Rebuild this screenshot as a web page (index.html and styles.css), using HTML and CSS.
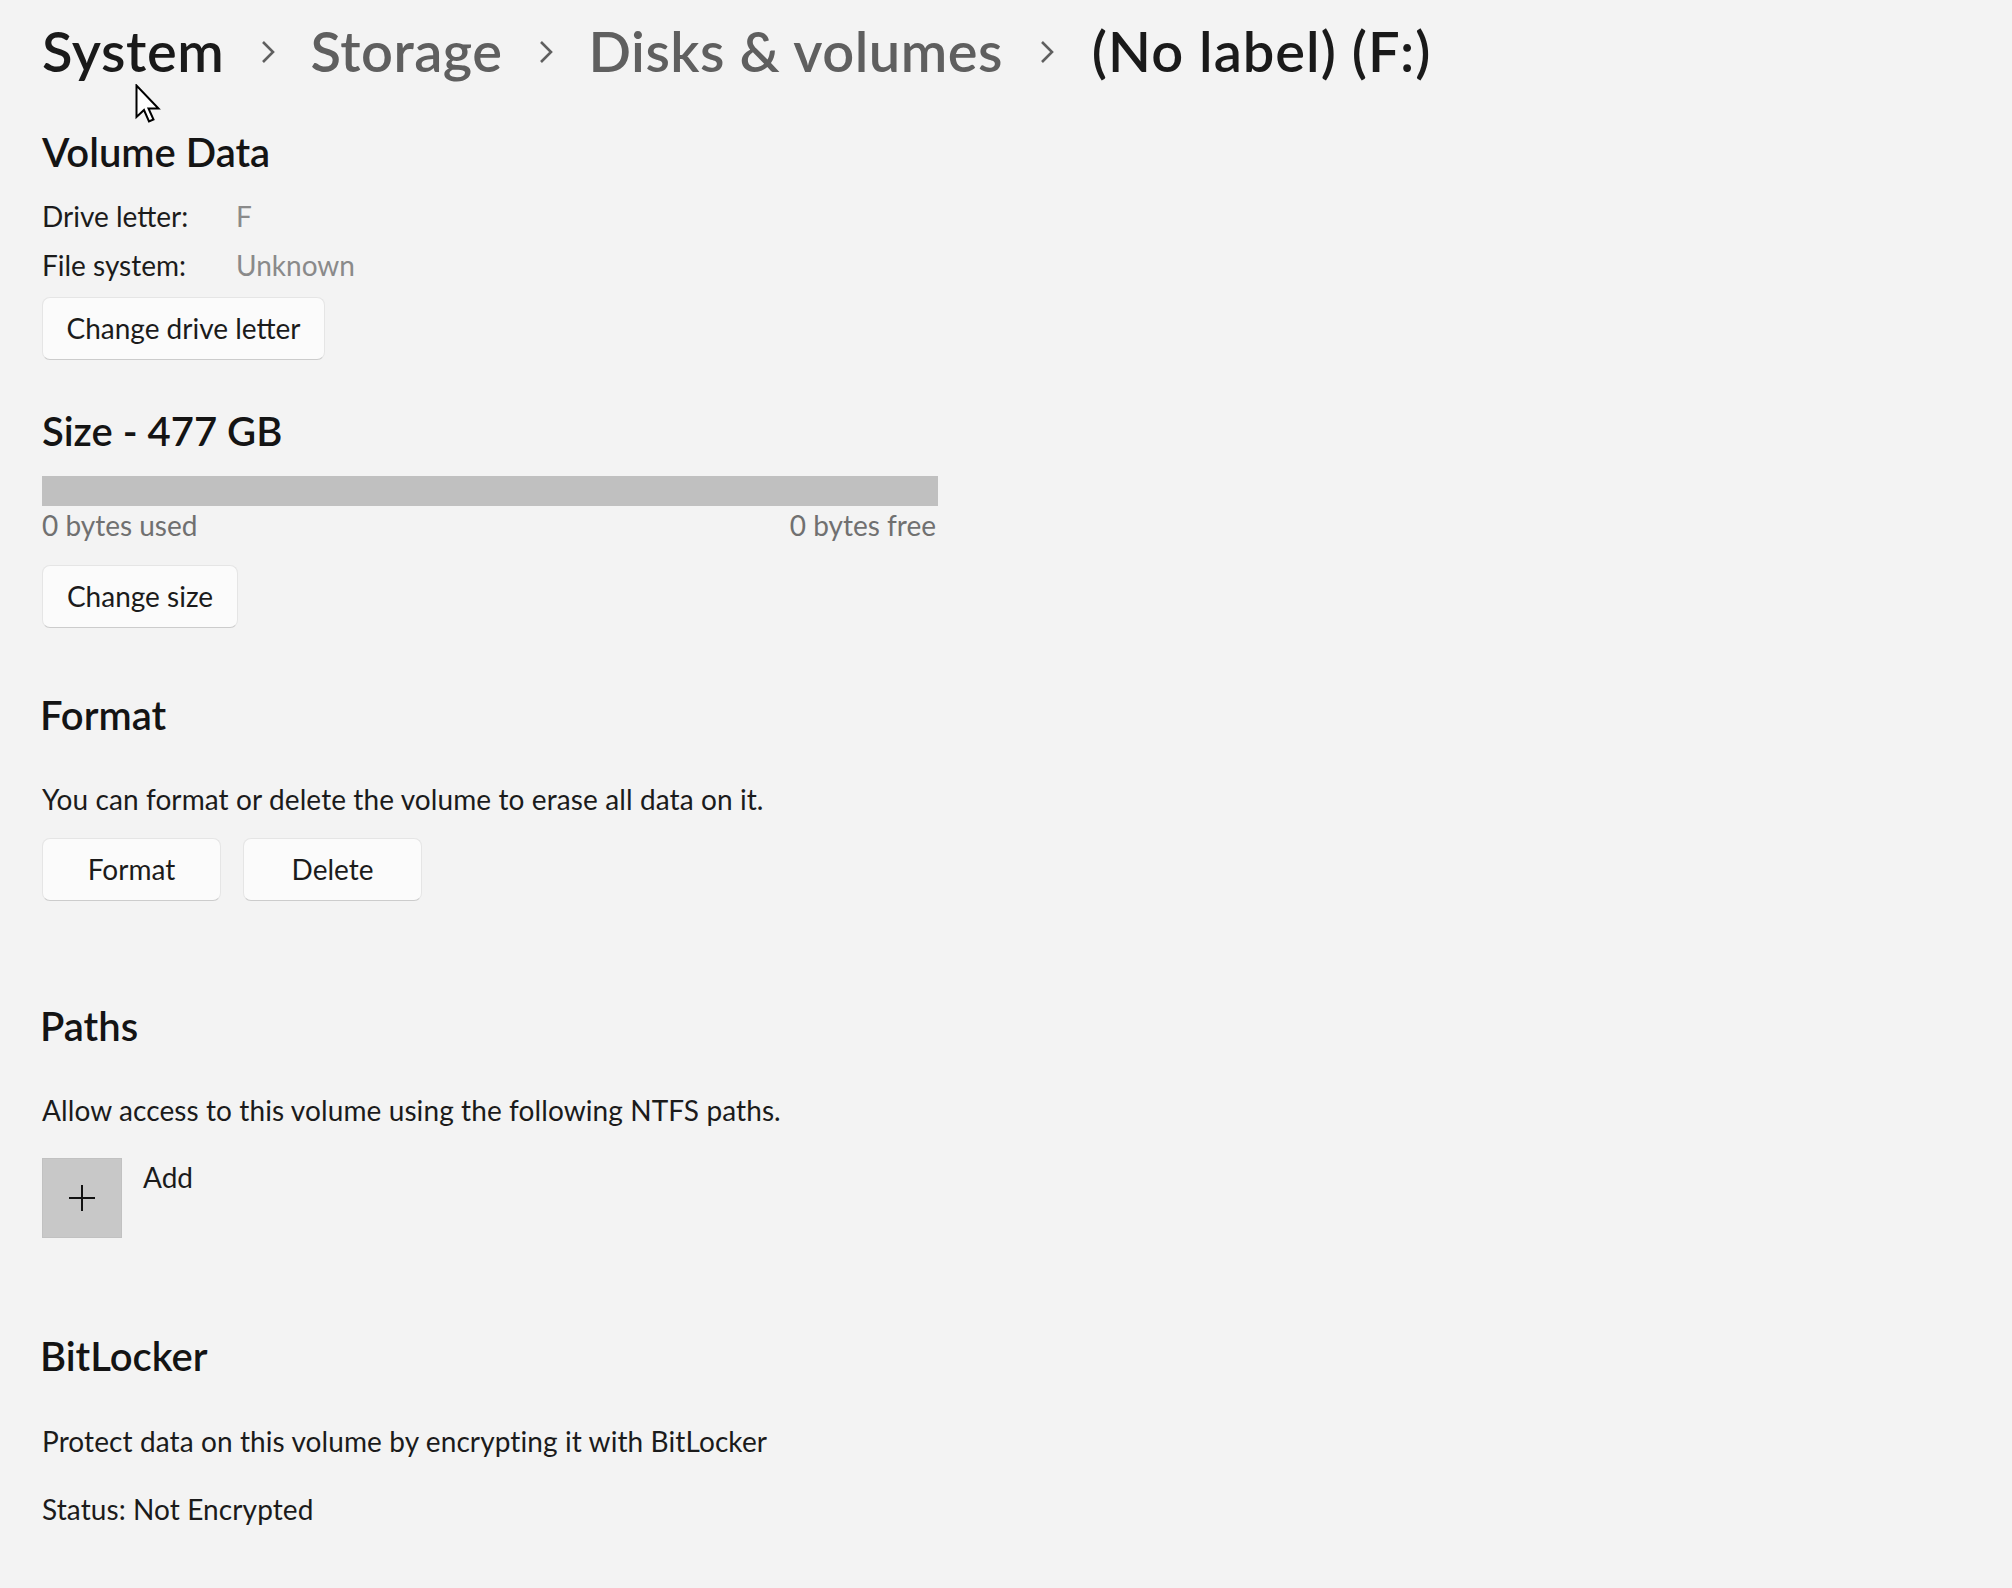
FILE: index.html
```html
<!DOCTYPE html>
<html lang="en">
<head>
<meta charset="utf-8">
<title>(No label) (F:)</title>
<link rel="stylesheet" href="styles.css">
</head>
<body>
<main class="page">
  <nav class="crumbs">
    <span class="crumb crumb-dark">System</span>
    <svg class="chev" viewBox="0 0 16 24" width="16" height="24"><path d="M3 2 L13 12 L3 22" fill="none" stroke="#5f5f5f" stroke-width="2.6"/></svg>
    <span class="crumb crumb-gray">Storage</span>
    <svg class="chev" viewBox="0 0 16 24" width="16" height="24"><path d="M3 2 L13 12 L3 22" fill="none" stroke="#5f5f5f" stroke-width="2.6"/></svg>
    <span class="crumb crumb-gray">Disks &amp; volumes</span>
    <svg class="chev chev-last" viewBox="0 0 16 24" width="16" height="24"><path d="M3 2 L13 12 L3 22" fill="none" stroke="#5f5f5f" stroke-width="2.6"/></svg>
    <span class="crumb crumb-dark crumb-current">(No label) (F:)</span>
  </nav>

  <section class="sec sec-volume">
    <h2 class="heading">Volume Data</h2>
    <div class="info">
      <div class="info-row"><span class="info-key">Drive letter:</span><span class="info-val">F</span></div>
      <div class="info-row"><span class="info-key">File system:</span><span class="info-val">Unknown</span></div>
    </div>
    <button class="btn btn-first">Change drive letter</button>
  </section>

  <section class="sec sec-size">
    <h2 class="heading">Size - 477 GB</h2>
    <div class="bar"></div>
    <div class="bar-labels"><span>0 bytes used</span><span>0 bytes free</span></div>
    <button class="btn btn-size">Change size</button>
  </section>

  <section class="sec sec-format">
    <h2 class="heading heading-shift">Format</h2>
    <p class="desc">You can format or delete the volume to erase all data on it.</p>
    <div class="btn-row">
      <button class="btn btn-wide">Format</button>
      <button class="btn btn-wide">Delete</button>
    </div>
  </section>

  <section class="sec sec-paths">
    <h2 class="heading heading-shift">Paths</h2>
    <p class="desc">Allow access to this volume using the following NTFS paths.</p>
    <div class="add-row">
      <div class="add-box"><svg viewBox="0 0 26 26" width="26" height="26"><path d="M13 0 V26 M0 13 H26" stroke="#111" stroke-width="2" fill="none"/></svg></div>
      <span class="add-label">Add</span>
    </div>
  </section>

  <section class="sec sec-bitlocker">
    <h2 class="heading heading-shift">BitLocker</h2>
    <p class="desc desc-bl">Protect data on this volume by encrypting it with BitLocker</p>
    <p class="desc desc-status">Status: Not Encrypted</p>
  </section>
</main>
<svg class="cursor" viewBox="0 0 26 40" width="26" height="40"><path d="M1.5 1.5 L1.5 33 L9 26 L14 37.5 L18.5 35.5 L13.5 24.5 L23.5 24.5 Z" fill="#fff" stroke="#000" stroke-width="2" stroke-linejoin="miter"/></svg>
</body>
</html>
```

FILE: styles.css
```css
html, body {
  margin: 0;
  padding: 0;
  background: #f3f3f3;
}
body {
  font-family: "Lato", "Noto Sans", sans-serif;
  color: #1b1b1b;
  width: 2012px;
  height: 1588px;
  overflow: hidden;
  position: relative;
}
.page {
  padding: 13px 0 0 42px;
  display: flex;
  flex-direction: column;
}
.crumbs {
  display: flex;
  align-items: center;
  height: 76px;
  font-size: 56px;
  line-height: 76px;
  font-weight: 600;
}
.crumb { white-space: nowrap; }
.crumb-dark { color: #1a1a1a; letter-spacing: 0.6px; }
.crumb-current { letter-spacing: 1px; }
.crumb-gray { color: #5f5f5f; letter-spacing: 0.5px; }
.chev {
  width: 16px;
  height: 24px;
  margin: 0 34px 0 36px;
  position: relative;
  top: 1px;
}
.chev-last { margin-right: 37px; }
.sec {
  display: flex;
  flex-direction: column;
  align-items: flex-start;
}
.heading {
  margin: 0;
  padding-top: 3px;
  font-size: 40px;
  line-height: 52px;
  font-weight: 600;
  color: #141414;
}
.heading-shift { margin-left: -2px; }
.sec-volume { margin-top: 34px; }
.sec-size { margin-top: 42px; }
.sec-format { margin-top: 58px; }
.sec-paths { margin-top: 96px; }
.sec-bitlocker { margin-top: 89px; }

.info {
  margin-top: 19px;
  display: flex;
  flex-direction: column;
  gap: 11px;
  font-size: 28px;
  line-height: 38px;
}
.info-row { display: flex; }
.info-key { width: 194px; color: #1b1b1b; }
.info-val { color: #8a8a8a; }

.btn {
  font-family: inherit;
  font-size: 28px;
  line-height: 38px;
  color: #1b1b1b;
  background: #fbfbfb;
  border: 1px solid #e5e5e5;
  border-bottom-color: #cccccc;
  border-radius: 8px;
  padding: 11px 22px 12px;
  margin: 0;
  cursor: default;
}
.btn-first { margin-top: 13px; width: 283px; }
.btn-size { margin-top: 21px; width: 196px; }
.btn-wide { width: 179px; }

.bar {
  margin-top: 19px;
  width: 896px;
  height: 30px;
  background: #c0c0c0;
}
.bar-labels {
  width: 894px;
  display: flex;
  justify-content: space-between;
  font-size: 28px;
  line-height: 38px;
  color: #707070;
}

.desc {
  margin: 39px 0 0;
  font-size: 28px;
  line-height: 38px;
  color: #1b1b1b;
  letter-spacing: 0.1px;
}
.desc-bl { margin-top: 40px; }
.desc-status { margin-top: 30px; }

.btn-row {
  margin-top: 20px;
  display: flex;
  gap: 22px;
}

.add-row {
  margin-top: 29px;
  display: flex;
  align-items: flex-start;
  gap: 21px;
}
.add-box {
  width: 78px;
  height: 78px;
  background: #c8c8c8;
  border: 1px solid #c1c1c1;
  display: flex;
  align-items: center;
  justify-content: center;
}
.add-label {
  font-size: 28px;
  line-height: 38px;
  color: #1b1b1b;
}

.cursor {
  position: absolute;
  left: 135px;
  top: 84px;
}
```
